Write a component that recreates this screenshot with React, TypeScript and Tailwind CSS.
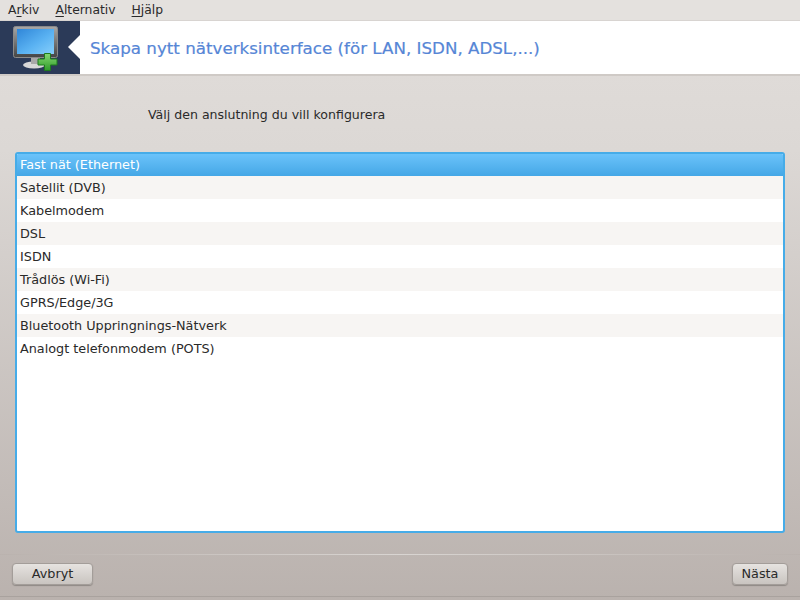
const rows = [
  "Fast nät (Ethernet)",
  "Satellit (DVB)",
  "Kabelmodem",
  "DSL",
  "ISDN",
  "Trådlös (Wi-Fi)",
  "GPRS/Edge/3G",
  "Bluetooth Uppringnings-Nätverk",
  "Analogt telefonmodem (POTS)",
];

function Mnemonic({ before = "", u, after }: { before?: string; u: string; after: string }) {
  return (
    <span>
      {before}
      <span className="underline underline-offset-2">{u}</span>
      {after}
    </span>
  );
}

function Logo() {
  return (
    <svg width="50" height="48" viewBox="0 0 50 48" className="ml-[12px]">
      <defs>
        <linearGradient id="scr" x1="0" y1="0" x2="1" y2="1">
          <stop offset="0" stopColor="#2f86d8" />
          <stop offset="0.55" stopColor="#5ab2f2" />
          <stop offset="1" stopColor="#86cffb" />
        </linearGradient>
        <linearGradient id="fr" x1="0" y1="0" x2="0" y2="1">
          <stop offset="0" stopColor="#a8a8a8" />
          <stop offset="1" stopColor="#444444" />
        </linearGradient>
        <linearGradient id="gr" x1="0" y1="0" x2="0" y2="1">
          <stop offset="0" stopColor="#86d872" />
          <stop offset="1" stopColor="#2f9a2a" />
        </linearGradient>
      </defs>
      <ellipse cx="22" cy="41" rx="11" ry="3.5" fill="#d8d8d8" />
      <rect x="19" y="33" width="9" height="7" fill="#a8a8a8" />
      <rect x="1.5" y="2.5" width="44" height="31" rx="2" fill="url(#fr)" stroke="#8a8a8a" />
      <rect x="5" y="5" width="37" height="25" fill="url(#scr)" />
      <path d="M32.5 29.5h6v5.5h6.5v6h-6.5v5.5h-6v-5.5h-6.5v-6h6.5z" fill="url(#gr)" stroke="#1f7a1f" strokeWidth="1" />
    </svg>
  );
}

export default function App() {
  return (
    <div
      className="w-[800px] h-[600px] overflow-hidden flex flex-col text-[12.55px] text-[#2a2a2a] bg-gradient-to-b from-[#e2dedb] via-[#dcd8d5] via-25% to-[#bab2ae]"
      style={{ fontFamily: '"DejaVu Sans", sans-serif' }}
    >
      <div className="h-[20px] flex items-center gap-[16px] pl-[8px] bg-[#e4e1de] shrink-0 text-[12.35px]">
        <Mnemonic before="A" u="r" after="kiv" />
        <Mnemonic u="A" after="lternativ" />
        <Mnemonic u="H" after="jälp" />
      </div>
      <div className="h-[56px] shrink-0 flex items-center bg-white border-t border-[#d8d4d1] border-b-2 border-b-[#cfcac6]">
        <div className="relative w-[80px] h-full bg-[#2b3a58] flex items-center shrink-0">
          <Logo />
          <div className="absolute right-0 top-[14px] w-0 h-0 border-y-[12px] border-y-transparent border-r-[12px] border-r-white" />
        </div>
        <div className="ml-[10px] pt-[2px] text-[16.7px] font-normal text-[#5686d6] [-webkit-text-stroke:0.2px_#5686d6]">
          Skapa nytt nätverksinterface (för LAN, ISDN, ADSL,...)
        </div>
      </div>
      <div className="pl-[148px] pt-[30px] h-[76px] shrink-0">Välj den anslutning du vill konfigurera</div>
      <div className="mx-[15px] h-[381px] shrink-0 bg-white border-2 border-[#46ace8] rounded-[3px] overflow-hidden text-[12.8px]">
        {rows.map((r, i) => (
          <div
            key={r}
            className={
              "h-[23px] flex items-center pl-[3px] pt-px " +
              (i === 0
                ? "-mt-px bg-gradient-to-b from-[#6cc4fb] to-[#44a7e6] text-white"
                : i % 2 === 1
                  ? "bg-[#f7f5f3]"
                  : "bg-white")
            }
          >
            {r}
          </div>
        ))}
      </div>
      <div className="mt-[21px] h-px shrink-0 bg-gradient-to-r from-[#bab2ae] via-[#d9d5d2] to-[#bab2ae]" />
      <div className="mt-[8px] px-[12px] flex justify-between shrink-0 text-[12.8px]">
        <button className="w-[81px] h-[22px] rounded-[4px] border border-[#a39d99] bg-gradient-to-b from-[#e6e3e0] to-[#c9c4c0] shadow-[0_1px_1px_#8f8985]">
          Avbryt
        </button>
        <button className="w-[56px] h-[22px] rounded-[4px] border border-[#a39d99] bg-gradient-to-b from-[#e6e3e0] to-[#c9c4c0] shadow-[0_1px_1px_#8f8985]">
          Nästa
        </button>
      </div>
      <div className="mt-[11px] h-px shrink-0 bg-[#a9a29e]" />
    </div>
  );
}
